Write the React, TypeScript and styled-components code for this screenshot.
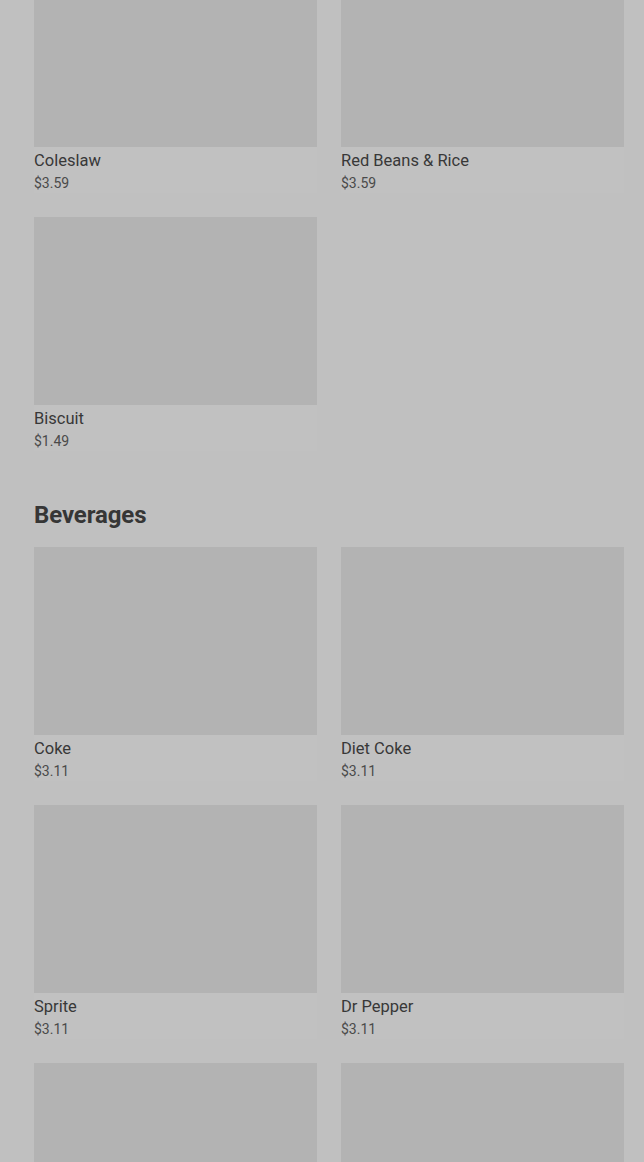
import React from "react";
import styled, { createGlobalStyle } from "styled-components";

const GlobalStyle = createGlobalStyle`
  html, body {
    margin: 0;
    padding: 0;
    background: #c0c0c0;
    font-family: Roboto, "Liberation Sans", sans-serif;
    overflow: hidden;
  }
`;

const Page = styled.div`
  width: 644px;
  height: 1162px;
  overflow: hidden;
  background: #c0c0c0;
`;

const Content = styled.div`
  display: flex;
  flex-direction: column;
  gap: 48px;
  margin-top: -41px;
  padding: 0 20px 0 34px;
`;

const Section = styled.section`
  display: flex;
  flex-direction: column;
`;

const Heading = styled.h2`
  margin: 0 0 16px;
  font-size: 24px;
  line-height: 32px;
  font-weight: 700;
  letter-spacing: -0.1px;
  color: #363636;
`;

const Grid = styled.div`
  display: grid;
  grid-template-columns: 283px 283px;
  column-gap: 24px;
  row-gap: 24px;
`;

const Card = styled.div`
  display: flex;
  flex-direction: column;
  background: #c1c1c1;
`;

const Thumb = styled.div`
  height: 188px;
  background: #b3b3b3;
`;

const Name = styled.div`
  margin-top: 4px;
  font-size: 16.5px;
  line-height: 20px;
  font-weight: 400;
  color: #383838;
`;

const Price = styled.div`
  margin-top: 2px;
  font-size: 14px;
  line-height: 20px;
  color: #4a4a4a;
`;

type Item = { name: string; price: string };

const sides: Item[] = [
  { name: "Coleslaw", price: "$3.59" },
  { name: "Red Beans & Rice", price: "$3.59" },
  { name: "Biscuit", price: "$1.49" },
];

const beverages: Item[] = [
  { name: "Coke", price: "$3.11" },
  { name: "Diet Coke", price: "$3.11" },
  { name: "Sprite", price: "$3.11" },
  { name: "Dr Pepper", price: "$3.11" },
  { name: "Sweet Tea", price: "$3.11" },
  { name: "Lemonade", price: "$3.11" },
];

const ItemCard = ({ name, price }: Item) => (
  <Card>
    <Thumb />
    <Name>{name}</Name>
    <Price>{price}</Price>
  </Card>
);

const App = () => (
  <Page>
    <GlobalStyle />
    <Content>
      <Section>
        <Grid>
          {sides.map((item) => (
            <ItemCard key={item.name} {...item} />
          ))}
        </Grid>
      </Section>
      <Section>
        <Heading>Beverages</Heading>
        <Grid>
          {beverages.map((item) => (
            <ItemCard key={item.name} {...item} />
          ))}
        </Grid>
      </Section>
    </Content>
  </Page>
);

export default App;
